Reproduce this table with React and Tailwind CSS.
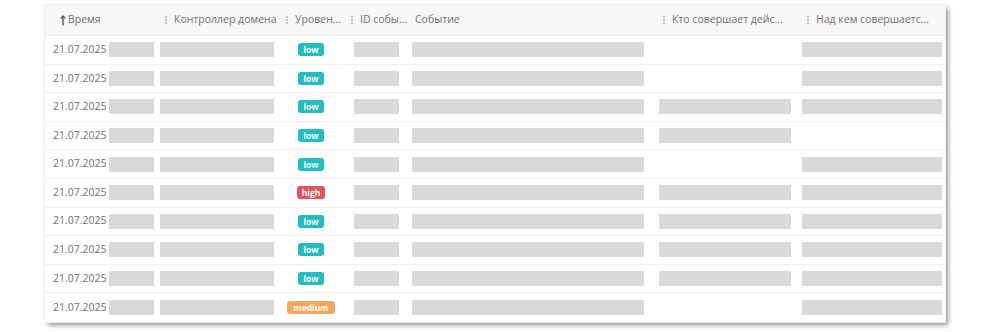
import React from "react";

const cols = "grid grid-cols-[113px_125px_65px_57px_250px_143px_147px]";

const rows = [
  { lvl: "low", c6: false, c7: true },
  { lvl: "low", c6: false, c7: true },
  { lvl: "low", c6: true, c7: true },
  { lvl: "low", c6: true, c7: false },
  { lvl: "low", c6: false, c7: true },
  { lvl: "high", c6: true, c7: true },
  { lvl: "low", c6: true, c7: true },
  { lvl: "low", c6: true, c7: true },
  { lvl: "low", c6: true, c7: true },
  { lvl: "medium", c6: false, c7: true },
];

const badgeCls = {
  low: "bg-[#22bec0] px-[5px]",
  high: "bg-[#e9505e] px-[5px]",
  medium: "bg-[#f4a85c] px-[6px]",
};

function Handle() {
  return (
    <span className="flex flex-col gap-[1px] mr-[7px]">
      <span className="w-[2px] h-[2px] bg-[#c4c4c4]" />
      <span className="w-[2px] h-[2px] bg-[#c4c4c4]" />
      <span className="w-[2px] h-[2px] bg-[#c4c4c4]" />
    </span>
  );
}

function Bar({ w, ml }) {
  return <div className={`h-[15px] bg-[#d9d9d9] ${w} ${ml}`} />;
}

export default function App() {
  return (
    <div className="w-[998px] h-[332px] bg-white pt-[5px] pl-[45px] font-['Open_Sans',sans-serif] text-[10.5px] text-[#707070]">
      <div className="w-[900px] bg-white shadow-[0_0_0_1px_#efefef,3px_3px_5px_rgba(0,0,0,0.45)]">
        <div className={`${cols} h-[31px] bg-[#f7f7f7] border-b border-[#ececec] items-center whitespace-nowrap`}>
          <div className="flex items-center pl-[15px]">
            <svg width="6" height="11" viewBox="0 0 6 11" className="mr-[2px]">
              <path d="M3 1 L3 10.5" stroke="#555" strokeWidth="1.4" />
              <path d="M0.7 3.5 L3 0.9 L5.3 3.5" fill="none" stroke="#555" strokeWidth="1.2" />
            </svg>
            <span>Время</span>
          </div>
          <div className="flex items-center pl-[7px]"><Handle />Контроллер домена</div>
          <div className="flex items-center pl-[3px]"><Handle />Уровен...</div>
          <div className="flex items-center pl-[3px]"><Handle />ID собы...</div>
          <div className="flex items-center pl-[10px]">Событие</div>
          <div className="flex items-center pl-[8px]"><Handle />Кто совершает дейс...</div>
          <div className="flex items-center pl-[9px]"><Handle />Над кем совершаетс...</div>
        </div>
        {rows.map((r, i) => (
          <div
            key={i}
            className={`${cols} h-[28.6px] items-center ${i < rows.length - 1 ? "border-b border-[#f0f0f0]" : ""}`}
          >
            <div className="flex items-center pl-[8px]">
              <span className="w-[56px]">21.07.2025</span>
              <Bar w="w-[45px]" ml="ml-0" />
            </div>
            <div className="flex items-center">
              <Bar w="w-[114px]" ml="ml-[2px]" />
            </div>
            <div className="flex justify-center pr-[9px]">
              <span
                className={`${badgeCls[r.lvl]} h-[13px] rounded-[3px] text-white font-bold text-[8.5px] leading-[13px]`}
              >
                {r.lvl}
              </span>
            </div>
            <div className="flex items-center">
              <Bar w="w-[45px]" ml="ml-[6px]" />
            </div>
            <div className="flex items-center">
              <Bar w="w-[232px]" ml="ml-[7px]" />
            </div>
            <div className="flex items-center">
              {r.c6 && <Bar w="w-[132px]" ml="ml-[4px]" />}
            </div>
            <div className="flex items-center">
              {r.c7 && <Bar w="w-[140px]" ml="ml-[4px]" />}
            </div>
          </div>
        ))}
      </div>
    </div>
  );
}
